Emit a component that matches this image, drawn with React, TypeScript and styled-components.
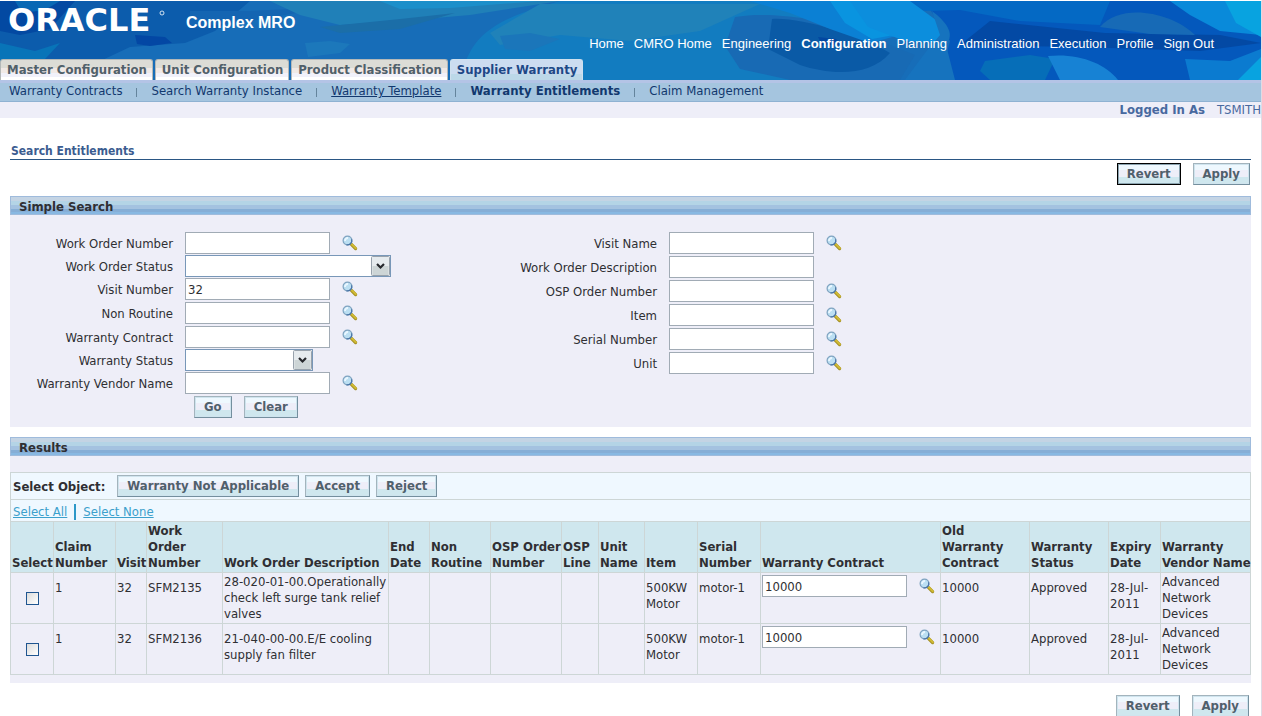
import React from "react";
import styled, { createGlobalStyle, css } from "styled-components";

const ui = '"DejaVu Sans Condensed", "DejaVu Sans", Tahoma, sans-serif';
const brand = '"Liberation Sans", Arial, sans-serif';

const GlobalStyle = createGlobalStyle`
  *, *::before, *::after { box-sizing: border-box; }
  html { overflow-x: hidden; }
  body {
    margin: 0;
    background: #fff;
    color: #2f2f33;
    font-family: ${ui};
    font-size: 13px;
    line-height: 16px;
  }
  input, select, button { font-family: inherit; font-size: inherit; color: inherit; }
`;

const Page = styled.div`
  border-top: 1px solid #fff;
  border-right: 1px solid #dfdbe4;
  min-height: 100vh;
  overflow: hidden;
`;

/* ---------- Header ---------- */

const Header = styled.header`
  position: relative;
  height: 79px;
  display: flex;
  flex-direction: column;
  justify-content: space-between;
  background: #176fb8;
`;

const Backdrop = styled.svg`
  position: absolute;
  inset: 0;
  width: 100%;
  height: 100%;
`;

const Masthead = styled.div`
  position: relative;
  display: flex;
  align-items: flex-start;
  padding-left: 8px;
`;

const Logo = styled.svg`
  display: block;
  width: 158px;
  height: 40px;
`;

const Product = styled.h1`
  margin: 0;
  padding: 12px 0 0 20px;
  font: 700 16px/20px ${brand};
  color: #fff;
`;

const GlobalNav = styled.nav`
  display: flex;
  gap: 10px;
  margin-left: auto;
  padding: 35px 47px 0 0;
`;

const GlobalLink = styled.a<{ $active?: boolean }>`
  color: #fff;
  text-decoration: none;
  font: ${(p) => (p.$active ? 700 : 400)} 13px/16px ${brand};
`;

const Tabs = styled.nav`
  position: relative;
  display: flex;
  gap: 2px;
`;

const Tab = styled.a<{ $active?: boolean }>`
  height: 21px;
  padding: 2px 5px 0 6px;
  border: 1px solid #b4b8b8;
  border-width: 1px 1px 0 1px;
  border-radius: 3px 3px 0 0;
  font-weight: 700;
  text-decoration: none;
  color: #50606a;
  background: linear-gradient(#dcdcd6 0 8px, #f0e9e6 8px 13px, #f1f1fa 13px 17px, #fff 17px);
  ${(p) =>
    p.$active &&
    css`
      color: #1d4886;
      border-color: #cfe0ee;
      background: linear-gradient(#ccdcf0 0 14px, #bcd8e8 14px);
    `}
`;

const SubNav = styled.nav`
  display: flex;
  align-items: center;
  gap: 14px;
  height: 22px;
  padding: 0 9px 2px;
  border-top: 3px solid #b4c4e6;
  border-bottom: 1px solid #8fb2d2;
  background: #a5c5df;
  line-height: 16px;
`;

const SubLink = styled.a<{ $active?: boolean; $underlined?: boolean }>`
  color: #12386e;
  font-weight: ${(p) => (p.$active ? 700 : 400)};
  text-decoration: ${(p) => (p.$underlined ? "underline" : "none")};
`;

const SubDivider = styled.span`
  width: 1px;
  height: 9px;
  margin-top: 2px;
  background: #64849c;
`;

const LoginBar = styled.div`
  display: flex;
  justify-content: flex-end;
  gap: 12px;
  height: 16px;
  background: #eeeef8;
  color: #48699f;
`;

/* ---------- Content ---------- */

const Main = styled.main`
  padding: 26px 10px 0;
`;

const PageTitle = styled.h2`
  margin: 0;
  padding: 0 1px;
  border-bottom: 1px solid #2a5684;
  font-size: 12px;
  line-height: 15px;
  font-weight: 700;
  color: #3b5c90;
`;

const Actions = styled.div<{ $bottom?: boolean }>`
  display: flex;
  justify-content: flex-end;
  gap: 12px;
  padding: ${(p) => (p.$bottom ? "12px 2px 0" : "3px 1px 0")};
`;

const Button = styled.button<{ $primary?: boolean }>`
  height: 22px;
  padding: 0 9px 1px;
  border: 1px solid;
  border-color: ${(p) => (p.$primary ? "#000" : "#a3b4bd #748f9e #748f9e #a3b4bd")};
  background: linear-gradient(#eef8fe 0 6px, #eeeef8 6px 13px, #cfe7ee 13px);
  box-shadow: inset 0 0 0 1px ${(p) => (p.$primary ? "#8ba4b0" : "#cfe4ee")};
  color: #50606c;
  font-weight: 700;
  line-height: 16px;
  white-space: nowrap;
`;

const Panel = styled.section`
  margin-top: 11px;
  background: #eeeef8;
  & + & { margin-top: 10px; }
`;

const PanelTitle = styled.h3`
  margin: 0;
  height: 19px;
  padding: 1px 8px 0;
  border: 1px solid #9fbbdc;
  font-size: 13px;
  line-height: 17px;
  font-weight: 700;
  background: linear-gradient(#c4d4e4 0 4px, #b4d4e6 4px 8px, #a4c2e0 8px 12px, #86aed6 12px 15px, #88b8e2 15px);
`;

const SearchForm = styled.form`
  display: grid;
  grid-template-columns: 39% 1fr;
  align-items: start;
  padding: 16px 0 9px;
`;

const FieldColumn = styled.div`
  display: flex;
  flex-direction: column;
`;

const Row = styled.div<{ $select?: boolean }>`
  display: grid;
  grid-template-columns: 163px auto 1fr;
  column-gap: 12px;
  align-items: center;
  padding: ${(p) => (p.$select ? 0 : 1)}px 0;
`;

const Label = styled.label`
  padding-top: 2px;
  text-align: right;
  white-space: nowrap;
`;

const TextInput = styled.input`
  width: 145px;
  height: 22px;
  padding: 0 2px;
  border: 1px solid #a1abb5;
  border-radius: 0;
  background: #fff;
  outline: none;
`;

const SelectBox = styled.span<{ $wide?: boolean }>`
  position: relative;
  display: block;
  width: ${(p) => (p.$wide ? 206 : 128)}px;
  height: 22px;
`;

const Select = styled.select`
  appearance: none;
  display: block;
  width: 100%;
  height: 22px;
  padding: 0 20px 0 3px;
  border: 1px solid #7897b8;
  border-radius: 0;
  background: #fff;
  outline: none;
`;

const SelectArrow = styled.svg`
  position: absolute;
  top: 1px;
  right: 1px;
  pointer-events: none;
`;

const LookupButton = styled.button`
  display: block;
  width: 16px;
  height: 16px;
  padding: 0;
  border: 0;
  background: none;
  line-height: 0;
`;

const FormButtons = styled.div`
  display: flex;
  gap: 12px;
  padding: 1px 0 0 184px;
`;

/* ---------- Results ---------- */

const Results = styled.div`
  padding: 16px 0 8px;
`;

const Toolbar = styled.div`
  display: flex;
  align-items: center;
  gap: 6px;
  height: 27px;
  padding: 0 2px;
  border: 1px solid #cdd6d6;
  border-bottom: 0;
  background: #eff8ff;
`;

const ToolbarLabel = styled.span`
  padding: 1px 6px 0 0;
  font-weight: 700;
`;

const LinkBar = styled.div`
  display: flex;
  align-items: center;
  gap: 7px;
  height: 22px;
  padding: 3px 2px 0;
  border: 1px solid #cdd6d6;
  border-bottom: 0;
  background: #eff8ff;
`;

const LinkDivider = styled.span`
  width: 2px;
  height: 16px;
  background: #2c98c8;
`;

const ActionLink = styled.a`
  color: #3ba0cc;
`;

const Table = styled.table`
  width: 100%;
  table-layout: fixed;
  border-collapse: collapse;
`;

const cell = css`
  border: 1px solid #cdd6d6;
  text-align: left;
`;

const Th = styled.th`
  ${cell}
  height: 51px;
  padding: 1px 0 1px 1px;
  vertical-align: bottom;
  background: #cfe7ee;
  white-space: nowrap;
`;

const Td = styled.td<{ $snug?: boolean; $center?: boolean }>`
  ${cell}
  height: 51px;
  padding: ${(p) => (p.$snug ? 1 : 7)}px 0 1px 1px;
  vertical-align: top;
  ${(p) =>
    p.$center &&
    css`
      padding: 1px 0 0;
      vertical-align: middle;
      text-align: center;
    `}
`;

const Checkbox = styled.input`
  appearance: none;
  display: block;
  width: 13px;
  height: 13px;
  margin: 0 auto;
  border: 1px solid #1f5590;
  background: linear-gradient(135deg, #dcdcdc, #fff);
  &:checked { background: #1f5590; }
`;

const ContractField = styled.div`
  display: flex;
  align-items: center;
  gap: 12px;
  padding-top: 1px;
`;

function Magnifier() {
  return (
    <svg width="16" height="16" viewBox="0 0 16 16" aria-hidden="true">
      <path d="M9.4 9.4 L13.6 13.6" stroke="#a08c20" strokeWidth="3.2" strokeLinecap="round" />
      <path d="M9.8 9.2 L13.8 13.2" stroke="#d0ba34" strokeWidth="2" strokeLinecap="round" />
      <circle cx="5.5" cy="5.5" r="4.4" fill="#bcdff2" stroke="#7fa3c0" strokeWidth="1.2" />
      <path d="M9.6 4.2 A4.4 4.4 0 0 1 4.4 9.8" fill="none" stroke="#4a75a6" strokeWidth="1.2" />
      <path d="M3 6 A2.8 2.8 0 0 1 6 3" fill="none" stroke="#eaf7ff" strokeWidth="1.8" />
    </svg>
  );
}

function Lookup({ name }: { name: string }) {
  return (
    <LookupButton type="button" aria-label={`Look up ${name}`}>
      <Magnifier />
    </LookupButton>
  );
}

interface FieldProps {
  id: string;
  label: string;
  value?: string;
  kind?: "text" | "select";
  wide?: boolean;
  lookup?: boolean;
}

function Field({ id, label, value, kind = "text", wide, lookup = true }: FieldProps) {
  return (
    <Row $select={kind === "select"}>
      <Label htmlFor={id}>{label}</Label>
      {kind === "select" ? (
        <SelectBox $wide={wide}>
          <Select id={id}>
            <option value="" />
          </Select>
          <SelectArrow width="19" height="20" viewBox="0 0 19 20" aria-hidden="true">
            <rect x="0.5" y="0.5" width="18" height="19" rx="1" fill="#e6ebee" stroke="#98a2ac" />
            <rect x="1.5" y="10" width="16" height="9" fill="#cdd5d6" />
            <path d="M6 8 L9.5 11.5 L13 8" fill="none" stroke="#26282c" strokeWidth="2.2" />
          </SelectArrow>
        </SelectBox>
      ) : (
        <TextInput id={id} type="text" defaultValue={value} />
      )}
      {kind === "text" && lookup && <Lookup name={label} />}
    </Row>
  );
}

const leftFields: FieldProps[] = [
  { id: "wo-number", label: "Work Order Number" },
  { id: "wo-status", label: "Work Order Status", kind: "select", wide: true },
  { id: "visit-number", label: "Visit Number", value: "32" },
  { id: "non-routine", label: "Non Routine" },
  { id: "contract", label: "Warranty Contract" },
  { id: "w-status", label: "Warranty Status", kind: "select" },
  { id: "vendor", label: "Warranty Vendor Name" },
];

const rightFields: FieldProps[] = [
  { id: "visit-name", label: "Visit Name" },
  { id: "wo-desc", label: "Work Order Description", lookup: false },
  { id: "osp", label: "OSP Order Number" },
  { id: "item", label: "Item" },
  { id: "serial", label: "Serial Number" },
  { id: "unit", label: "Unit" },
];

const columns: [string[], number][] = [
  [["Select"], 43],
  [["Claim", "Number"], 62],
  [["Visit"], 31],
  [["Work", "Order", "Number"], 76],
  [["Work Order Description"], 166],
  [["End", "Date"], 41],
  [["Non", "Routine"], 61],
  [["OSP Order", "Number"], 71],
  [["OSP", "Line"], 37],
  [["Unit", "Name"], 46],
  [["Item"], 53],
  [["Serial", "Number"], 63],
  [["Warranty Contract"], 180],
  [["Old", "Warranty", "Contract"], 89],
  [["Warranty", "Status"], 79],
  [["Expiry", "Date"], 52],
  [["Warranty", "Vendor Name"], 90],
];

const rows = [
  { order: "SFM2135", description: "28-020-01-00.Operationally check left surge tank relief valves", long: true },
  { order: "SFM2136", description: "21-040-00-00.E/E cooling supply fan filter", long: false },
];

const globalLinks = ["Home", "CMRO Home", "Engineering", "Configuration", "Planning", "Administration", "Execution", "Profile", "Sign Out"];
const tabs = ["Master Configuration", "Unit Configuration", "Product Classification", "Supplier Warranty"];
const subLinks = ["Warranty Contracts", "Search Warranty Instance", "Warranty Template", "Warranty Entitlements", "Claim Management"];

function HeaderArt() {
  return (
    <Backdrop viewBox="0 0 1261 79" preserveAspectRatio="none" aria-hidden="true">
      <rect width="1261" height="79" fill="#176db8" />
      <path d="M0 0H250L215 30L185 42L130 46L60 79H0Z" fill="#0c5cac" />
      <path d="M0 0H75L50 28L20 34L0 30Z" fill="#0349a2" />
      <path d="M15 0H60L45 9L22 12Z" fill="#0868b4" />
      <path d="M0 42L35 50L60 42L45 58L0 62Z" fill="#0874b8" />
      <path d="M135 34L165 36L172 42L150 45L137 43Z" fill="#0347a4" />
      <path d="M190 10L250 10L330 6L240 22L190 26Z" fill="#1465b2" />
      <path d="M270 0H560L470 14L400 20L340 24L300 14Z" fill="#2080b8" />
      <path d="M380 0H540L450 7L400 8Z" fill="#1c8fca" />
      <path d="M320 26L400 18L455 12L400 28L340 32Z" fill="#1b6ea8" />
      <path d="M305 42L330 40L350 43L340 52L308 56Z" fill="#1c78bb" />
      <path d="M560 0C520 12 480 22 466 60L460 79H900L850 0Z" fill="#127cc0" />
      <path d="M540 3H760L700 30L630 40L560 34L500 44L490 32Z" fill="#2082b9" />
      <path d="M500 35L530 32L560 38L530 50L505 48Z" fill="#1b76ba" />
      <path d="M735 16C770 10 820 18 850 28L915 54L900 79H790L740 68L725 45Z" fill="#186ab4" />
      <path d="M772 18C800 16 860 34 890 52C870 76 830 74 800 64L768 48Z" fill="#0a5aa6" />
      <path d="M818 36L836 38L842 44L822 44Z" fill="#0347a0" />
      <path d="M750 0H880L900 34L870 42L830 28L790 12Z" fill="#0b80d4" />
      <path d="M830 0H865L890 20L894 34L872 38L845 22Z" fill="#0994e0" />
      <ellipse cx="916" cy="25" rx="8" ry="6" fill="#12a4e2" />
      <path d="M880 0H1261V79H940L950 40L930 8Z" fill="#0458bc" />
      <path d="M870 0H1110L1100 24L1020 20L960 9L925 10Z" fill="#0469c4" />
      <path d="M850 0H910L940 22L948 42L905 40L868 26Z" fill="#0c8edd" />
      <path d="M932 10C945 20 956 32 946 44L955 79H905L925 52L940 34Z" fill="#1673be" />
      <path d="M990 20L1105 32L1220 34L1261 42L1200 50L1080 46L960 44Z" fill="#0349a4" />
      <path d="M985 60L1030 54L1055 58L1045 79H990L980 70Z" fill="#066eb8" />
      <path d="M1048 55C1078 52 1105 62 1118 79H1060Z" fill="#1782d4" />
      <path d="M1100 26C1120 2 1170 10 1195 34L1150 33Z" fill="#176ab6" />
      <path d="M1170 0H1261V34L1220 30L1190 14Z" fill="#098ada" />
      <path d="M1225 0H1261V36L1236 22Z" fill="#08a3e0" />
      <path d="M1261 48V79H1190L1185 58L1230 60Z" fill="#0b7bd0" />
      <path d="M1261 56V79H1238Z" fill="#08a3e0" />
    </Backdrop>
  );
}

export default function App() {
  return (
    <>
      <GlobalStyle />
      <Page>
        <Header>
          <HeaderArt />
          <Masthead>
            <Logo viewBox="0 0 158 40" role="img" aria-label="Oracle">
              <text x="0" y="30" fill="#fff" fontFamily='"DejaVu Sans", sans-serif' fontWeight="700" fontSize="32">
                ORACLE
              </text>
              <circle cx="154" cy="12" r="2" fill="none" stroke="#fff" strokeWidth="1" opacity="0.8" />
            </Logo>
            <Product>Complex MRO</Product>
            <GlobalNav aria-label="Global">
              {globalLinks.map((l) => (
                <GlobalLink key={l} href="#" $active={l === "Configuration"}>
                  {l}
                </GlobalLink>
              ))}
            </GlobalNav>
          </Masthead>
          <Tabs aria-label="Modules">
            {tabs.map((t) => (
              <Tab key={t} href="#" $active={t === "Supplier Warranty"}>
                {t}
              </Tab>
            ))}
          </Tabs>
        </Header>
        <SubNav aria-label="Section">
          {subLinks.map((l, i) => (
            <React.Fragment key={l}>
              {i > 0 && <SubDivider />}
              <SubLink href="#" $active={l === "Warranty Entitlements"} $underlined={l === "Warranty Template"}>
                {l}
              </SubLink>
            </React.Fragment>
          ))}
        </SubNav>
        <LoginBar>
          <b>Logged In As</b>
          <span>TSMITH</span>
        </LoginBar>

        <Main>
          <PageTitle>Search Entitlements</PageTitle>
          <Actions>
            <Button type="button" $primary>Revert</Button>
            <Button type="button">Apply</Button>
          </Actions>

          <Panel>
            <PanelTitle>Simple Search</PanelTitle>
            <SearchForm onSubmit={(e) => e.preventDefault()}>
              <FieldColumn>
                {leftFields.map((f) => (
                  <Field key={f.id} {...f} />
                ))}
                <FormButtons>
                  <Button type="submit">Go</Button>
                  <Button type="reset">Clear</Button>
                </FormButtons>
              </FieldColumn>
              <FieldColumn>
                {rightFields.map((f) => (
                  <Field key={f.id} {...f} />
                ))}
              </FieldColumn>
            </SearchForm>
          </Panel>

          <Panel>
            <PanelTitle>Results</PanelTitle>
            <Results>
              <Toolbar>
                <ToolbarLabel>Select Object:</ToolbarLabel>
                <Button type="button">Warranty Not Applicable</Button>
                <Button type="button">Accept</Button>
                <Button type="button">Reject</Button>
              </Toolbar>
              <LinkBar>
                <ActionLink href="#">Select All</ActionLink>
                <LinkDivider />
                <ActionLink href="#">Select None</ActionLink>
              </LinkBar>
              <Table>
                <colgroup>
                  {columns.map(([lines, width]) => (
                    <col key={lines.join(" ")} width={width} />
                  ))}
                </colgroup>
                <thead>
                  <tr>
                    {columns.map(([lines]) => (
                      <Th key={lines.join(" ")} scope="col">
                        {lines.map((line, i) => (
                          <React.Fragment key={line}>
                            {i > 0 && <br />}
                            {line}
                          </React.Fragment>
                        ))}
                      </Th>
                    ))}
                  </tr>
                </thead>
                <tbody>
                  {rows.map((r) => (
                    <tr key={r.order}>
                      <Td $center>
                        <Checkbox type="checkbox" aria-label={`Select ${r.order}`} />
                      </Td>
                      <Td>1</Td>
                      <Td>32</Td>
                      <Td>{r.order}</Td>
                      <Td $snug={r.long}>{r.description}</Td>
                      <Td />
                      <Td />
                      <Td />
                      <Td />
                      <Td />
                      <Td>500KW Motor</Td>
                      <Td>motor-1</Td>
                      <Td $snug>
                        <ContractField>
                          <TextInput type="text" defaultValue="10000" aria-label={`Warranty contract for ${r.order}`} />
                          <Lookup name="Warranty Contract" />
                        </ContractField>
                      </Td>
                      <Td>10000</Td>
                      <Td>Approved</Td>
                      <Td>28-Jul-2011</Td>
                      <Td $snug>Advanced Network Devices</Td>
                    </tr>
                  ))}
                </tbody>
              </Table>
            </Results>
          </Panel>

          <Actions $bottom>
            <Button type="button">Revert</Button>
            <Button type="button">Apply</Button>
          </Actions>
        </Main>
      </Page>
    </>
  );
}
